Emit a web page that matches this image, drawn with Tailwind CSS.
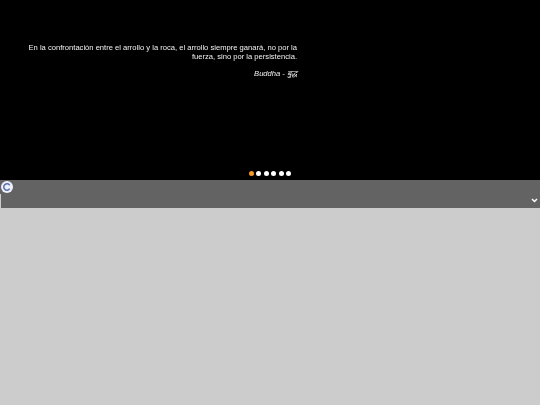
<!DOCTYPE html>
<html lang="es">
<head>
    <meta charset="UTF-8">
    <script src="https://cdn.jsdelivr.net/npm/@tailwindcss/browser@4"></script>
    <title>Frases</title>
</head>
<body class="bg-[#cccccc] h-[405px] overflow-hidden font-['Liberation_Sans',Arial,sans-serif]">
    <section class="bg-black h-[180px] flex flex-col">
        <div class="w-[297px] pl-[27px] pt-[43px] text-right text-white text-[7.6px] leading-[9px] opacity-95 blur-[0.2px]">
            <p>En la confrontación entre el arrollo y la roca, el arrollo siempre ganará, no por la fuerza, sino por la persistencia.</p>
            <p class="italic mt-[8px]">Buddha - बुद्ध</p>
        </div>
        <div class="mt-auto mb-[4px] flex justify-center gap-[2.6px]">
            <span class="w-[5px] h-[5px] rounded-full bg-[#f59a23]"></span>
            <span class="w-[5px] h-[5px] rounded-full bg-white"></span>
            <span class="w-[5px] h-[5px] rounded-full bg-white"></span>
            <span class="w-[5px] h-[5px] rounded-full bg-white"></span>
            <span class="w-[5px] h-[5px] rounded-full bg-white"></span>
            <span class="w-[5px] h-[5px] rounded-full bg-white"></span>
        </div>
    </section>
    <section class="relative bg-[#636363] h-[28px] pt-[14px]">
        <svg class="absolute left-[1px] top-[1px]" width="12" height="12" viewBox="0 0 12 12">
            <circle cx="6" cy="6" r="6" fill="#eef1fc"/>
            <path d="M8.7 4.3A3.2 3.2 0 1 0 8.7 7.7" fill="none" stroke="#5a6fa8" stroke-width="1.5"/>
        </svg>
        <div class="h-[14px] border-l border-[#cccccc] flex items-center justify-end pr-[2px]">
            <svg class="mb-[2px]" width="7" height="5" viewBox="0 0 7 5">
                <path d="M1 1L3.5 3.5L6 1" fill="none" stroke="#ffffff" stroke-width="1.5"/>
            </svg>
        </div>
    </section>
</body>
</html>
